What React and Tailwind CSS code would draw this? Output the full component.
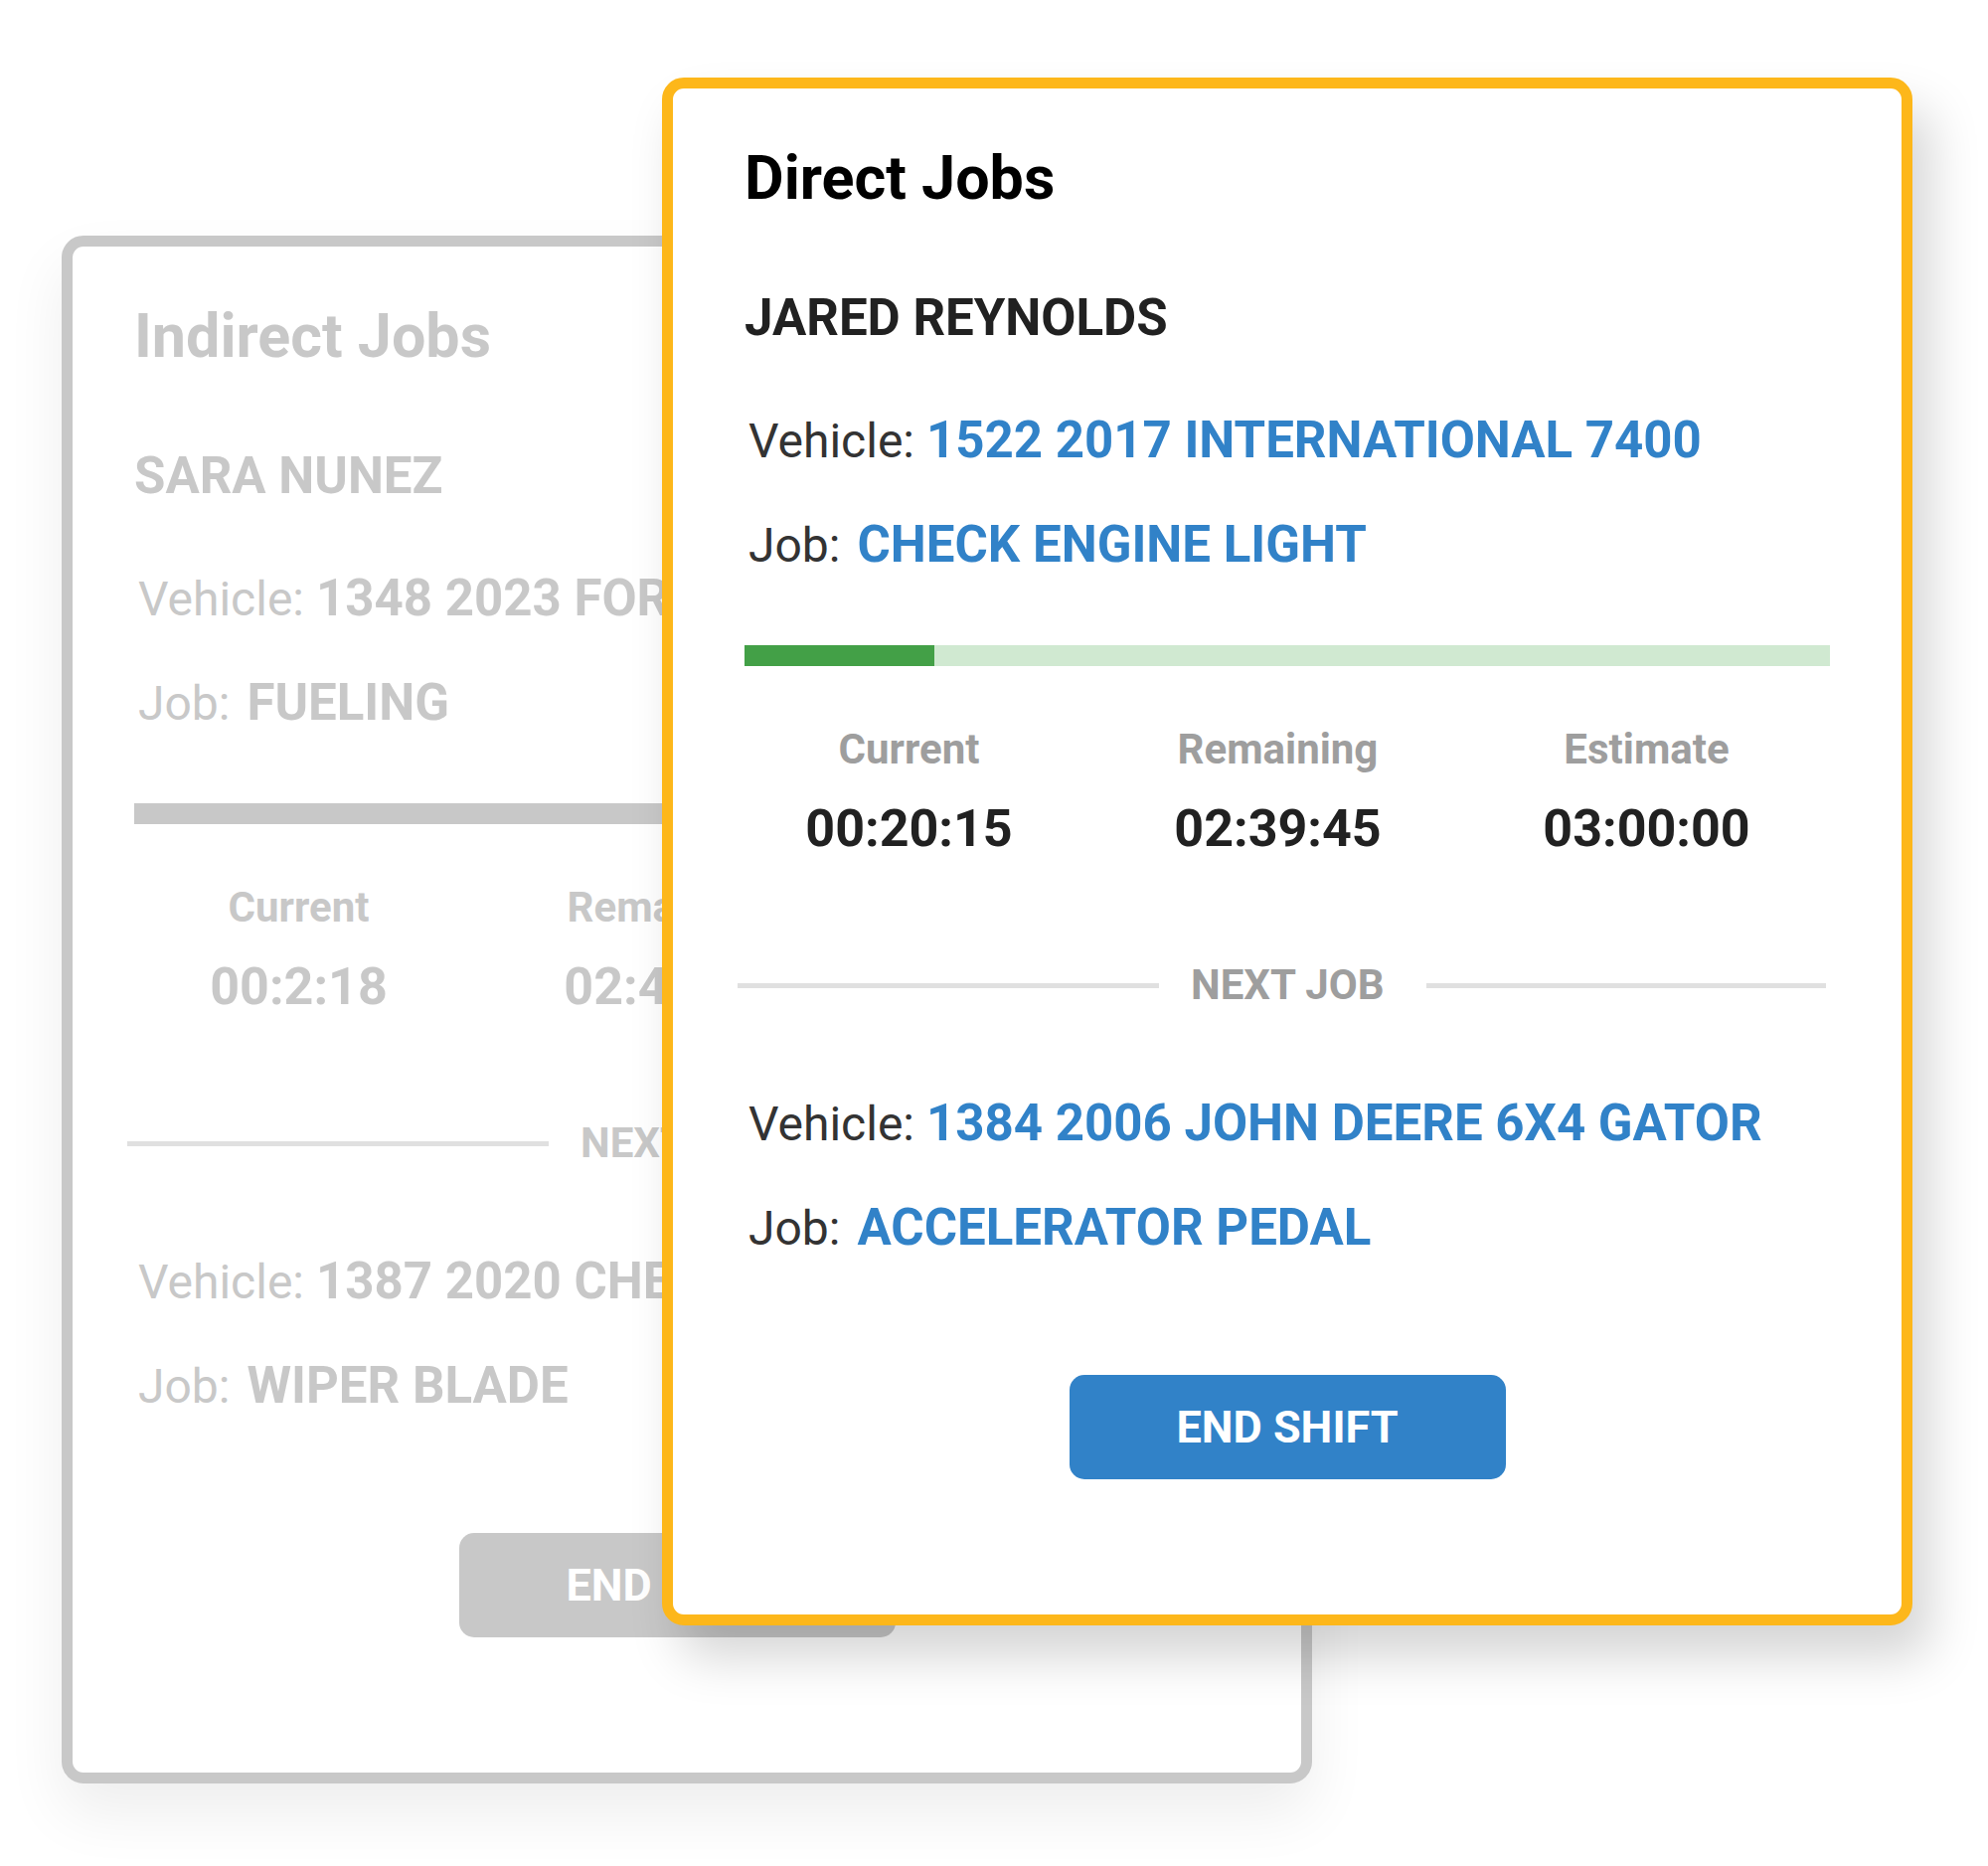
const front = {
  title: "Direct Jobs",
  name: "JARED REYNOLDS",
  vehicle: "1522 2017 INTERNATIONAL 7400",
  job: "CHECK ENGINE LIGHT",
  stats: [
    { label: "Current", value: "00:20:15" },
    { label: "Remaining", value: "02:39:45" },
    { label: "Estimate", value: "03:00:00" },
  ],
  nextVehicle: "1384 2006 JOHN DEERE 6X4 GATOR",
  nextJob: "ACCELERATOR PEDAL",
}

const back = {
  title: "Indirect Jobs",
  name: "SARA NUNEZ",
  vehicle: "1348 2023 FORD F-150",
  job: "FUELING",
  stats: [
    { label: "Current", value: "00:2:18" },
    { label: "Remaining", value: "02:47:42" },
    { label: "Estimate", value: "03:00:00" },
  ],
  nextVehicle: "1387 2020 CHEVROLET SILVERADO",
  nextJob: "WIPER BLADE",
}

function Row({ label, value, muted, className }) {
  return (
    <div className={`pl-[4px] whitespace-nowrap text-[48px] leading-none font-['Roboto',sans-serif] ${className}`}>
      <span className={`font-normal ${muted ? "text-[#c8c8c8]" : "text-[#333333]"}`}>{label}</span>
      <span
        className={`text-[51px] font-bold ${label === "Job:" ? "ml-[17px]" : "ml-[12px]"} ${
          muted ? "text-[#c8c8c8]" : "text-[#3182c8]"
        }`}
      >
        {value}
      </span>
    </div>
  )
}

function JobCard({ data, muted }) {
  const main = muted ? "text-[#c8c8c8]" : "text-[#212121]"
  const label = muted ? "text-[#c8c8c8]" : "text-[#9e9e9e]"

  return (
    <div
      className={`w-[1258px] h-[1557px] rounded-[22px] border-[11px] bg-white font-['Roboto',sans-serif] ${
        muted
          ? "border-[#c8c8c8] shadow-[0_30px_60px_rgba(0,0,0,0.07)]"
          : "border-[#fdb71a] shadow-[18px_32px_50px_rgba(0,0,0,0.17)]"
      }`}
    >
      <div className={muted ? "pl-[62px] pr-[82px]" : "pl-[72px] pr-[72px]"}>
        <h1 className={`mt-[60px] text-[61px] leading-none font-bold ${muted ? "text-[#c8c8c8]" : "text-black"}`}>
          {data.title}
        </h1>
        <p className={`mt-[84px] text-[51px] leading-none font-bold ${main}`}>{data.name}</p>

        <Row className="mt-[72px]" label="Vehicle:" value={data.vehicle} muted={muted} />
        <Row className="mt-[54px]" label="Job:" value={data.job} muted={muted} />

        {/* progress */}
        <div className={`mt-[76px] h-[21px] w-full ${muted ? "bg-[#c8c8c8]" : "bg-[#d0e9d1]"}`}>
          {!muted && <div className="h-full w-[17.5%] bg-[#43a047]" />}
        </div>

        <div className="ml-[-20px] w-[1113px] grid grid-cols-3 mt-[63px] text-center font-bold">
          {data.stats.map((s) => (
            <div key={s.label} className="flex flex-col items-center">
              <span className={`text-[42px] leading-none ${label}`}>{s.label}</span>
              <span className={`mt-[33px] text-[52px] leading-none ${main}`}>{s.value}</span>
            </div>
          ))}
        </div>

        {/* next job divider */}
        <div className="ml-[-7px] w-[1095px] mt-[110px] flex items-center">
          <div className="w-[424px] h-[5px] bg-[#e0e0e0]" />
          <span className={`ml-[32px] mr-[42px] text-[42px] leading-none font-bold ${label}`}>NEXT JOB</span>
          <div className="flex-1 h-[5px] bg-[#e0e0e0]" />
        </div>

        <Row className="mt-[92px]" label="Vehicle:" value={data.nextVehicle} muted={muted} />
        <Row className="mt-[54px]" label="Job:" value={data.nextJob} muted={muted} />

        <button
          className={`mt-[123px] mx-auto flex items-center justify-center w-[439px] h-[105px] rounded-[15px] text-white text-[45px] leading-none font-bold ${
            muted ? "bg-[#c8c8c8]" : "bg-[#3182c8]"
          }`}
        >
          END SHIFT
        </button>
      </div>
    </div>
  )
}

export default function App() {
  return (
    <div className="relative w-[2000px] h-[1877px] bg-white overflow-hidden">
      <div className="pt-[237px] pl-[62px]">
        <JobCard data={back} muted />
      </div>
      <div className="absolute left-[666px] top-[78px]">
        <JobCard data={front} />
      </div>
    </div>
  )
}
